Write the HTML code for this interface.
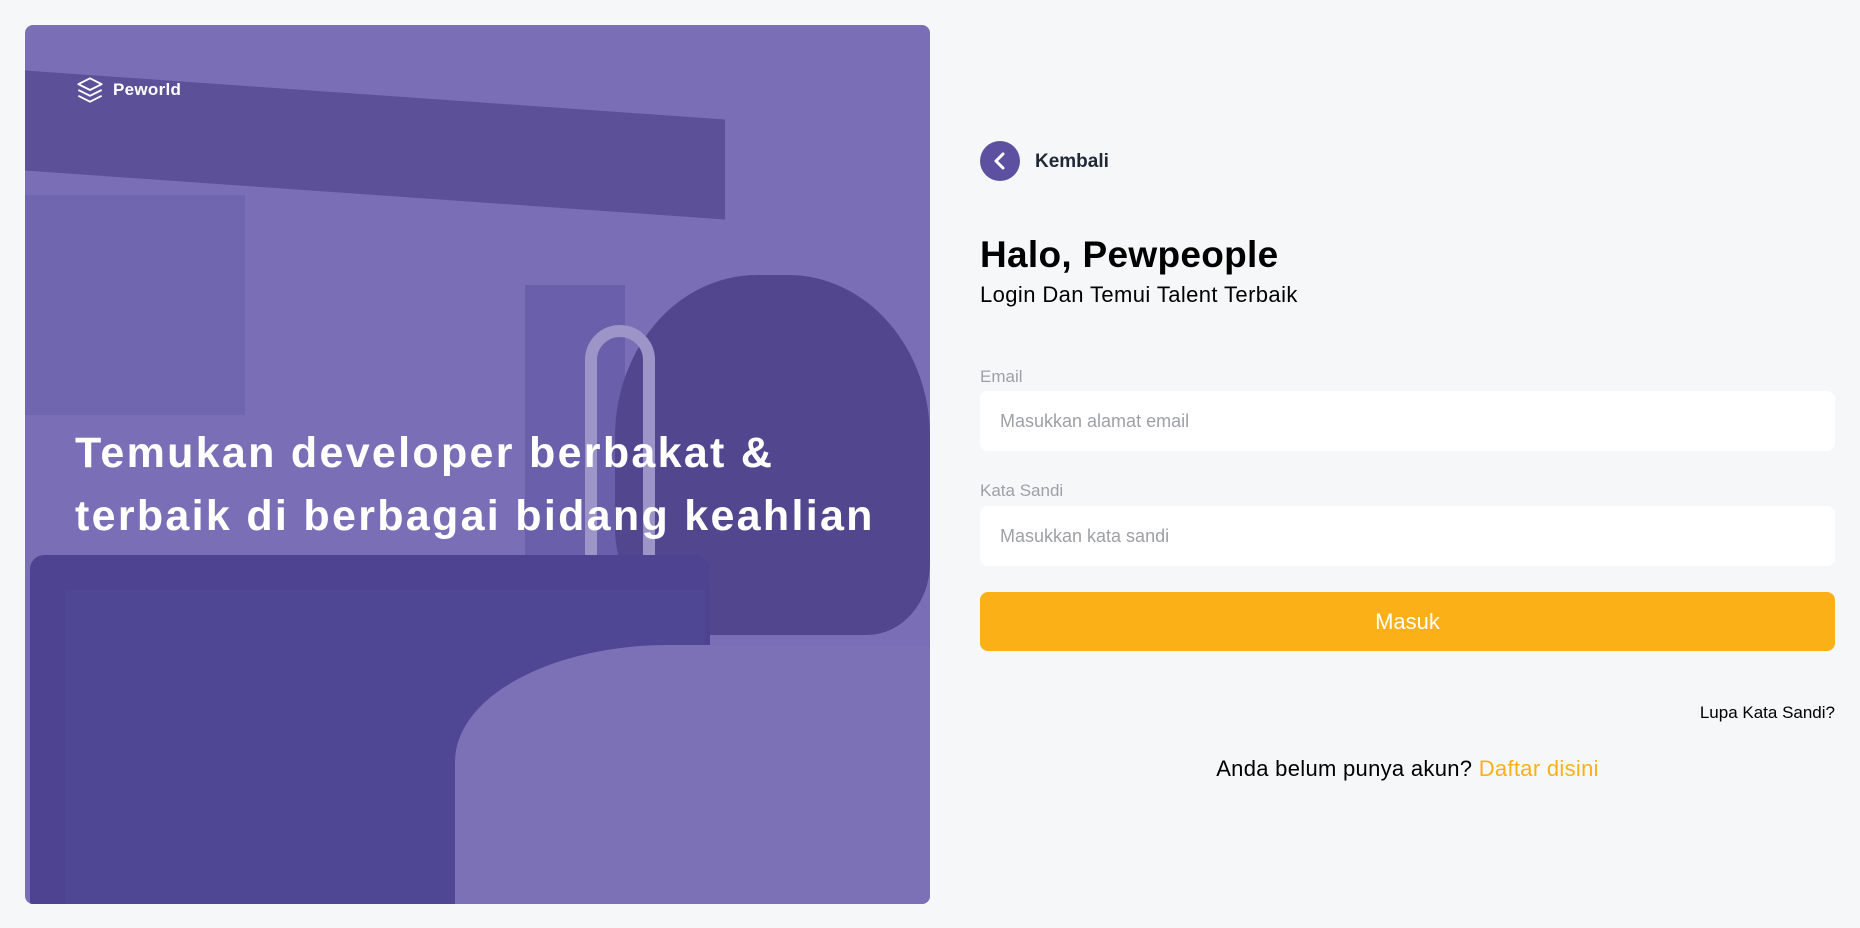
<!DOCTYPE html>
<html><head><meta charset="utf-8"><style>
*{margin:0;padding:0;box-sizing:border-box}
body{width:1860px;height:928px;background:#F6F7F8;font-family:"Liberation Sans",sans-serif;position:relative;overflow:hidden}
.panel{position:absolute;left:25px;top:25px;width:905px;height:879px;border-radius:8px;overflow:hidden;background:#7a6fb6}
.panel div{position:absolute}
.abs{position:absolute}
.input{position:absolute;left:980px;width:855px;height:60px;background:#fff;border-radius:8px;font-size:18px;color:#9EA0A5;padding-left:20px;line-height:60px}
.label{position:absolute;left:980px;font-size:17px;color:#9EA0A5}
</style></head><body>
<div class="panel">
  <div style="left:0;top:70px;width:700px;height:100px;background:#5c5099;transform:skewY(4deg)"></div>
  <div style="left:0;top:170px;width:220px;height:220px;background:#7066b0"></div>
  <div style="left:500px;top:260px;width:100px;height:380px;background:#6a5fab"></div>
  <div style="left:590px;top:250px;width:315px;height:360px;background:#52468f;border-radius:45% 45% 20% 30%"></div>
  <div style="left:560px;top:300px;width:70px;height:300px;border:12px solid #9d94c8;border-radius:40px;"></div>
  <div style="left:5px;top:530px;width:680px;height:349px;background:#4e4390;border-radius:14px 14px 0 0"></div>
  <div style="left:40px;top:565px;width:640px;height:314px;background:#4f4694"></div>
  <div style="left:430px;top:620px;width:475px;height:259px;background:#7c70b7;border-radius:45% 0 0 0"></div>
</div>
<svg class="abs" style="left:75px;top:76px" width="30" height="28" viewBox="0 0 24 24" fill="none" stroke="#fff" stroke-width="1.6" stroke-linejoin="round"><path d="M12 2 2 7l10 5 10-5-10-5z"/><path d="M2 12l10 5 10-5"/><path d="M2 17l10 5 10-5"/></svg>
<div class="abs" style="left:113px;top:80px;color:#fff;font-size:17px;font-weight:bold;letter-spacing:0.3px">Peworld</div>
<div class="abs" style="left:75px;top:422px;color:#fff;font-size:43px;font-weight:bold;line-height:63px;letter-spacing:2.3px">Temukan developer berbakat &amp;<br>terbaik di berbagai bidang keahlian</div>

<div class="abs" style="left:980px;top:141px;width:40px;height:40px;border-radius:50%;background:#5E50A1"></div>
<svg class="abs" style="left:980px;top:141px" width="40" height="40" viewBox="0 0 40 40"><path d="M23 13 16 20l7 7" stroke="#fff" stroke-width="3" fill="none" stroke-linecap="round" stroke-linejoin="round"/></svg>
<div class="abs" style="left:1035px;top:151px;font-size:19px;font-weight:bold;color:#1F2A36">Kembali</div>
<div class="abs" style="left:980px;top:234px;font-size:37px;font-weight:bold;color:#000;letter-spacing:0.3px">Halo, Pewpeople</div>
<div class="abs" style="left:980px;top:282px;font-size:22px;color:#000;letter-spacing:0.4px">Login Dan Temui Talent Terbaik</div>
<div class="label" style="top:367px">Email</div>
<div class="input" style="top:391px">Masukkan alamat email</div>
<div class="label" style="top:481px">Kata Sandi</div>
<div class="input" style="top:506px">Masukkan kata sandi</div>
<div class="abs" style="left:980px;top:592px;width:855px;height:59px;background:#FBB017;border-radius:8px;color:#fff;font-size:22px;text-align:center;line-height:59px">Masuk</div>
<div class="abs" style="right:25px;top:703px;font-size:17px;color:#000">Lupa Kata Sandi?</div>
<div class="abs" style="left:980px;width:855px;top:756px;text-align:center;font-size:22px;color:#000;letter-spacing:0.3px">Anda belum punya akun? <span style="color:#FBB017">Daftar disini</span></div>
</body></html>
